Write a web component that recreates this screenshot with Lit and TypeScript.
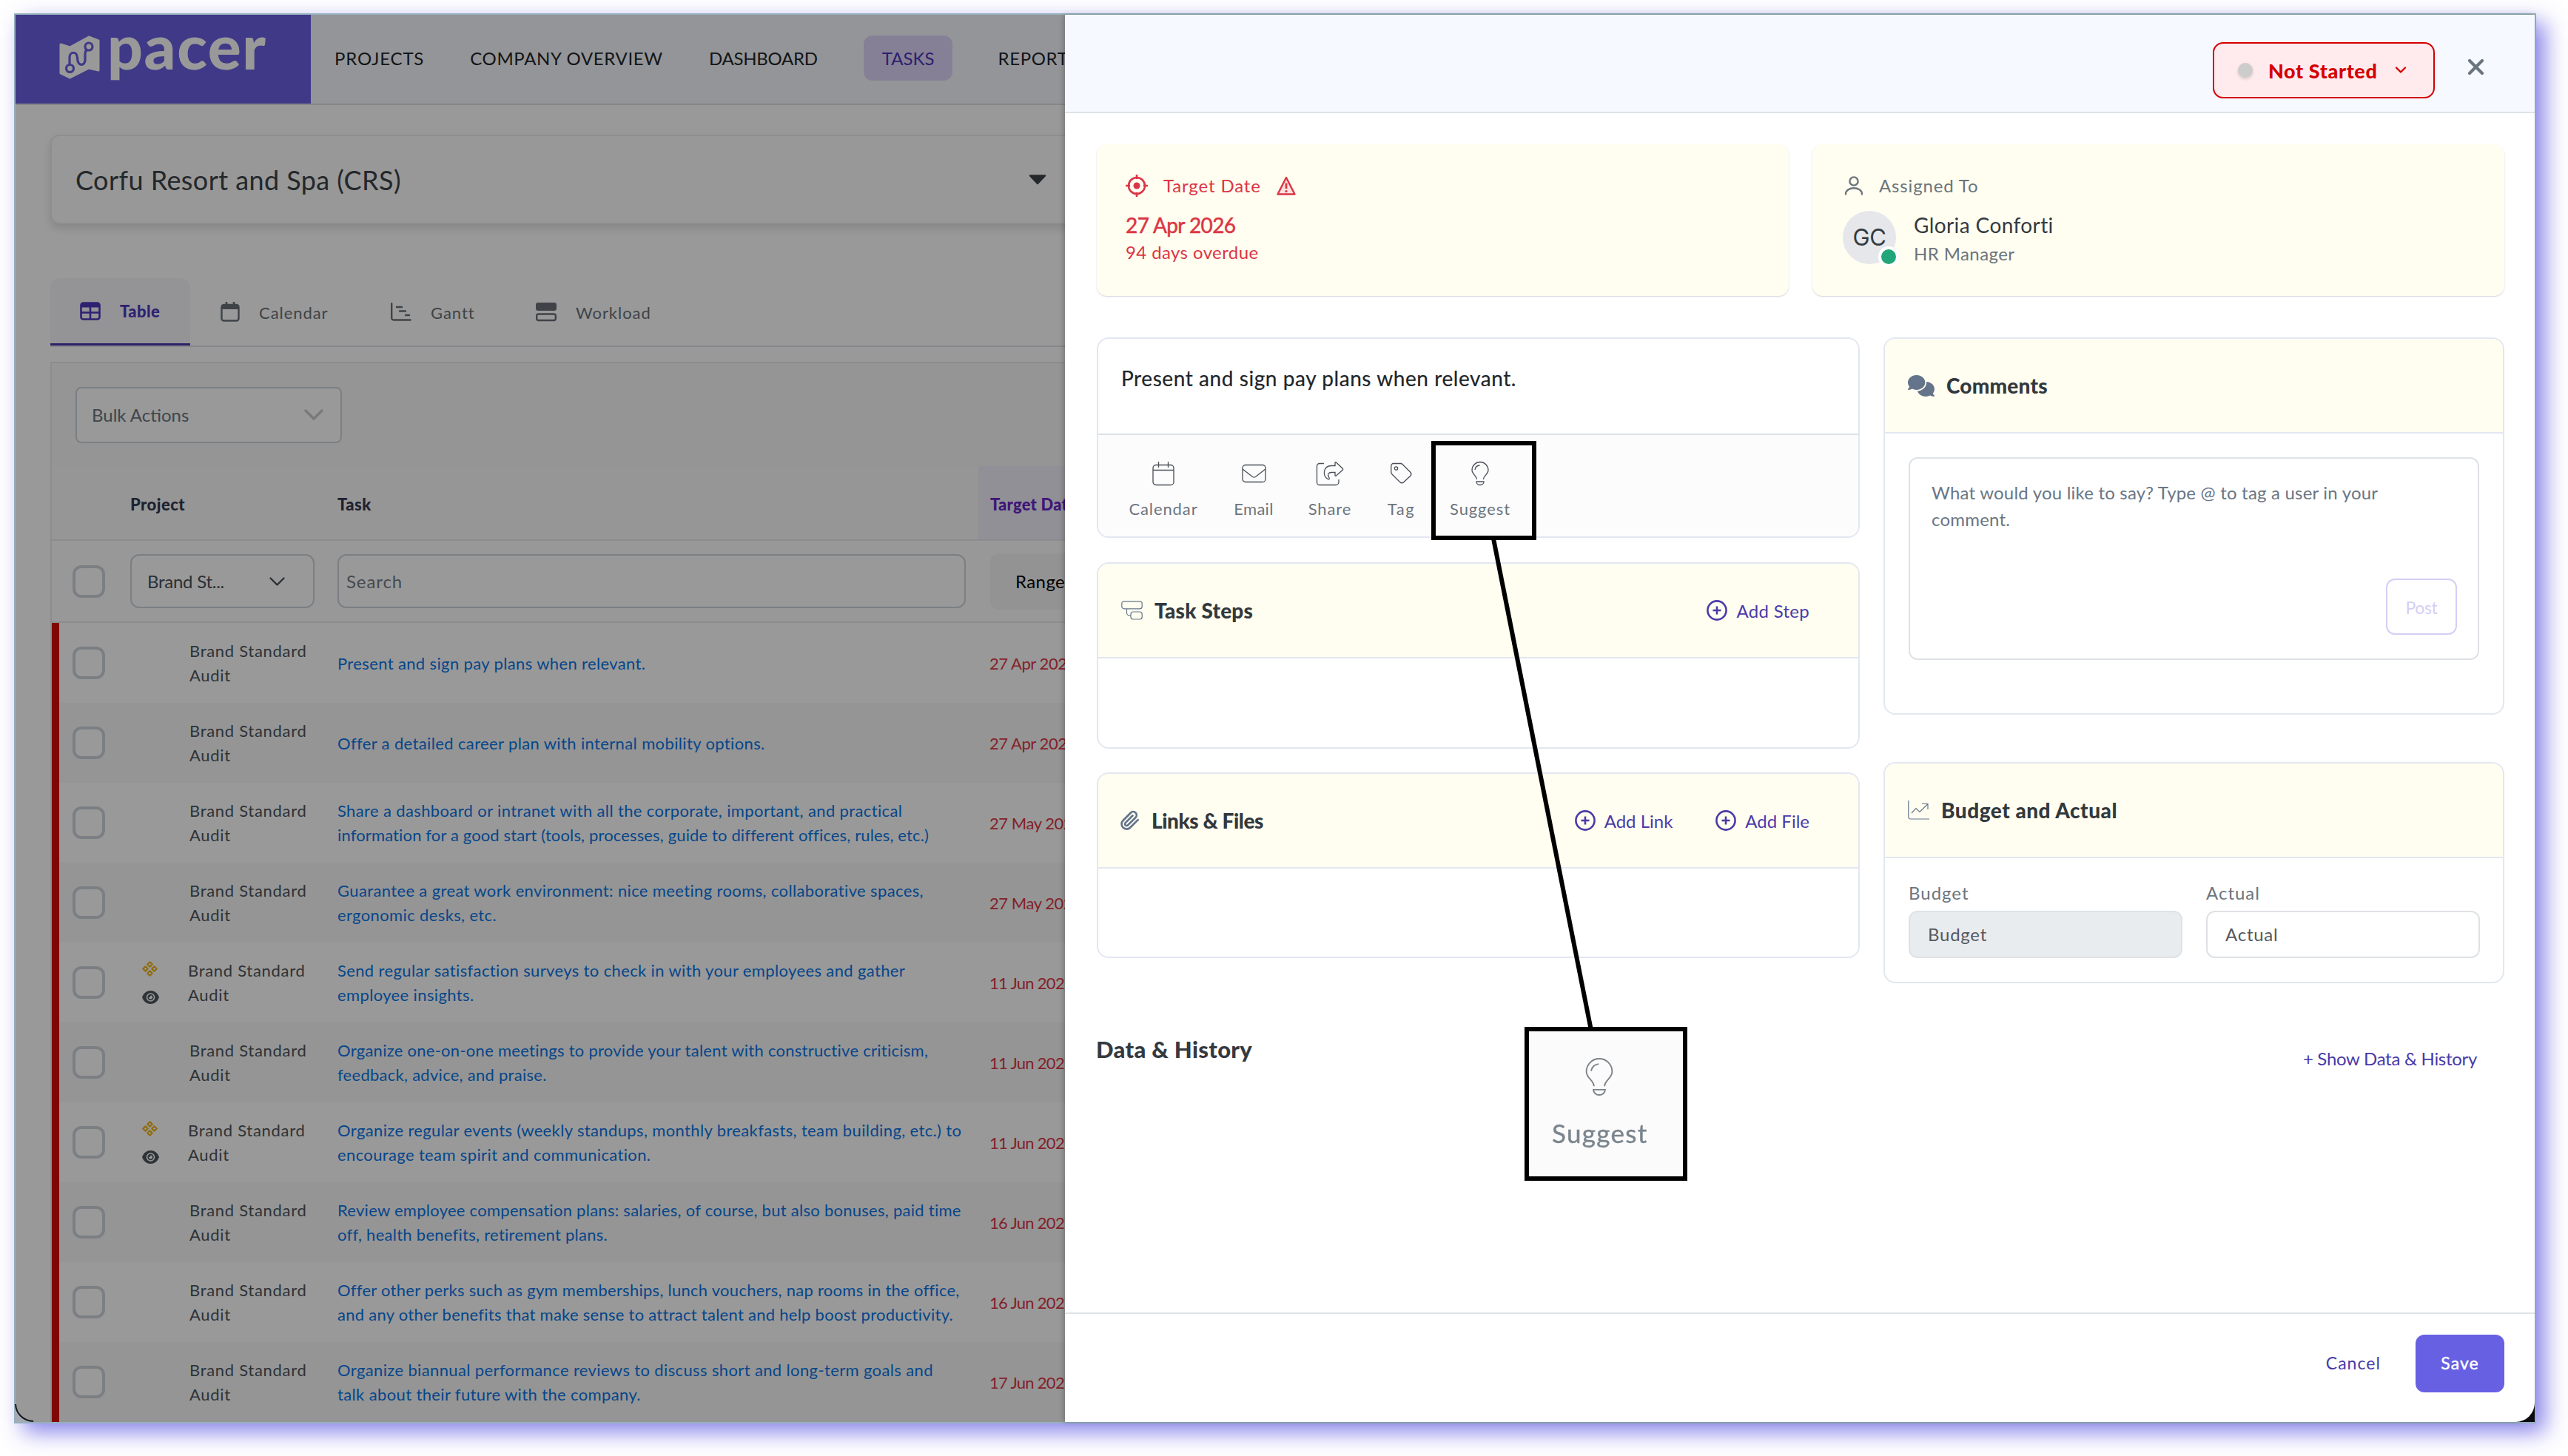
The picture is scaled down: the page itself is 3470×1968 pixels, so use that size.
import { LitElement, html, css, svg, nothing } from "lit";
import { customElement } from "lit/decorators.js";

type Task = { lines: string[]; date: string; flagged?: boolean; snug?: boolean };

const TASKS: Task[] = [
  { lines: ["Present and sign pay plans when relevant."], date: "27 Apr 2026" },
  { lines: ["Offer a detailed career plan with internal mobility options."], date: "27 Apr 2026" },
  { lines: ["Share a dashboard or intranet with all the corporate, important, and practical", "information for a good start (tools, processes, guide to different offices, rules, etc.)"], date: "27 May 2026" },
  { lines: ["Guarantee a great work environment: nice meeting rooms, collaborative spaces,", "ergonomic desks, etc."], date: "27 May 2026" },
  { lines: ["Send regular satisfaction surveys to check in with your employees and gather", "employee insights."], date: "11 Jun 2026", flagged: true },
  { lines: ["Organize one-on-one meetings to provide your talent with constructive criticism,", "feedback, advice, and praise."], date: "11 Jun 2026", snug: true },
  { lines: ["Organize regular events (weekly standups, monthly breakfasts, team building, etc.) to", "encourage team spirit and communication."], date: "11 Jun 2026", flagged: true },
  { lines: ["Review employee compensation plans: salaries, of course, but also bonuses, paid time", "off, health benefits, retirement plans."], date: "16 Jun 2026", snug: true },
  { lines: ["Offer other perks such as gym memberships, lunch vouchers, nap rooms in the office,", "and any other benefits that make sense to attract talent and help boost productivity."], date: "16 Jun 2026", snug: true },
  { lines: ["Organize biannual performance reviews to discuss short and long-term goals and", "talk about their future with the company."], date: "17 Jun 2026" },
];

const plusCircle = svg`<svg class="ico" width="28" height="28" viewBox="0 0 28 28"><circle cx="14" cy="14" r="12.6"/><path d="M14 8.5v11M8.5 14h11"/></svg>`;
const bulb = svg`<path d="M7.5 24C7.5 19 1 17 1 11.5a11 11 0 0 1 22 0C23 17 16.500 19 16.500 24M5 11a7 7 0 0 1 6.500-6M7 27h10a5 4.500 0 0 1-10 0z"/>`;

@customElement("app-root")
export class AppRoot extends LitElement {
  static styles = css`
    :host { display: block; width: 3470px; height: 1968px; overflow: hidden; background: #fff; font-family: Lato, "Open Sans", sans-serif; color: #343a40; }
    * { box-sizing: border-box; }
    span { white-space: nowrap; }
    svg { display: block; flex: none; fill: none; stroke: currentColor; overflow: visible; }
    .stage { padding: 18px 0 0 19px; }
    .frame { position: relative; display: flex; width: 3408px; height: 1906px; border: 2px solid #94b0bd; background: linear-gradient(90deg, #a3abb5 50%, #0a0c12 50%); box-shadow: 12px 12px 28px rgba(103, 96, 226, .77); }
    .page { position: relative; width: 1418px; height: 1902px; overflow: hidden; background: #fff; border-bottom-left-radius: 22px; flex: none; }
    .shade { position: absolute; inset: 0; background: rgba(0, 0, 0, .4); }

    .top { display: flex; height: 122px; border-bottom: 2px solid #dde0e5; background: #f7f9fe; }
    .brand { display: flex; width: 399px; height: 120px; background: #695fe3; color: #fff; padding: 29px 0 0 59px; gap: 10px; flex: none; }
    .word { font-size: 84px; font-weight: 900; line-height: 84px; letter-spacing: 1.6px; margin-top: -29px; }
    .nav { display: flex; align-items: center; gap: 62px; padding: 0 0 4px 32px; height: 120px; }
    .nv { font-size: 24px; color: #212529; line-height: 61px; }
    .n1 { letter-spacing: .85px; } .n2 { letter-spacing: .65px; } .n3 { letter-spacing: -.25px; }
    .nv.on { color: #4b35ba; padding: 0 24px 0 25px; background: #ded5f9; border-radius: 12px; height: 61px; }

    .content { padding: 40px 0 0 47px; width: 1500px; }
    .picker { display: flex; align-items: center; justify-content: space-between; height: 121px; border: 2px solid #e9edee; border-radius: 12px; padding: 0 105px 0 32px; background: #fdfdfd; box-shadow: 0 6px 12px rgba(0, 0, 0, .12); color: #3c4349; }
    .place { font-size: 36px; letter-spacing: .42px; }
    .tabs { display: flex; margin-top: 73px; height: 93px; border-bottom: 2px solid #dee2e6; color: #6a7178; }
    .tab { display: flex; align-items: center; height: 91px; padding: 0 0 0 41px; font-size: 22px; gap: 26px; letter-spacing: .95px; }
    .tab span { margin-top: 1px; }
    .tab.a { width: 189px; padding: 0 0 0 40px; background: #f7f7fc; border-radius: 12px 12px 0 0; border-bottom: 3px solid #4a37b0; color: #4e38bc; font-weight: 900; gap: 26px; letter-spacing: .4px; }
    .tab.b { width: 230px; } .tab.c { width: 196px; }
    .panel { margin-top: 20px; border: 2px solid #e6eaeb; border-bottom: 0; height: 1500px; background: #fff; }
    .bulk { height: 139px; background: #f9f9f9; padding: 32px 0 0 32px; }
    .sel { display: flex; align-items: center; justify-content: space-between; border: 2px solid #ced4da; border-radius: 8px; background: #fff; }
    .sel.big { width: 360px; height: 76px; padding: 0 23px 2px 20px; color: #6c757d; font-size: 24px; }
    .chev { stroke: #c8cacc; }
    .row { display: grid; grid-template-columns: 106px 280px 866px 1fr; align-items: center; height: 108px; }
    .hd { height: 101px; border-bottom: 2px solid #e6eaeb; background: #fbfafb; font-size: 22px; font-weight: 900; color: #343850; letter-spacing: .45px; }
    .hd span { margin-top: 3px; }
    .tgt { background: #f1f1fb; height: 99px; display: flex; align-items: center; padding-left: 16px; color: #6a26c8; letter-spacing: .2px; }
    .flt { height: 111px; border-bottom: 2px solid #e6eaeb; background: #fdfdfd; font-size: 24px; }
    .flt .sel { height: 73px; border-radius: 12px; }
    .prj { width: 249px; padding: 0 38px 0 21px; color: #495057; letter-spacing: -.25px; }
    .srch { width: 849px; padding: 0 10px; color: #757c83; letter-spacing: .9px; }
    .rng { margin-left: 16px; height: 76px; background: #f6f6f6; border-radius: 12px; display: flex; align-items: center; padding-left: 34px; color: #000; letter-spacing: .4px; }
    .body { border-left: 10px solid #d40b08; font-size: 22px; }
    .body .row { grid-template-columns: 96px 280px 866px 1fr; line-height: 33px; }
    .body .row:nth-child(even) { background: #f9f9f9; }
    .cb { width: 44px; height: 44px; border: 4px solid #ced4da; border-radius: 12px; background: #fff; margin-left: 28px; }
    .body .cb { margin-left: 18px; }
    .who { display: flex; align-items: center; color: #4d555d; letter-spacing: .7px; }
    .marks { width: 80px; padding-left: 15px; display: flex; flex-direction: column; gap: 19px; flex: none; }
    .marks.f { width: 78px; padding-left: 16px; }
    .amber { stroke: #f0b41c; }
    .col { display: flex; flex-direction: column; }
    .link { color: #0b76e6; letter-spacing: .37px; }
    .link.snug { letter-spacing: .27px; }
    .long { letter-spacing: .14px; }
    .date { color: #da3746; padding-left: 15px; letter-spacing: -.45px; }
    .date.jun { letter-spacing: -.7px; }

    .drawer { position: relative; width: 1986px; height: 1902px; display: flex; flex-direction: column; background: #fff; border-bottom-right-radius: 26px; box-shadow: -2px 0 6px rgba(0, 0, 0, .22); }
    .dh { height: 133px; border-bottom: 2px solid #dee2e6; background: #f6f9ff; display: flex; justify-content: flex-end; padding: 37px 69px 0 0; flex: none; }
    .status { display: flex; align-items: center; width: 300px; height: 76px; border: 2px solid #d50000; border-radius: 14px; background: #ffebee; color: #d50000; padding: 0 36px 0 32px; font-size: 27px; font-weight: 900; letter-spacing: .6px; }
    .dot { width: 20px; height: 20px; border-radius: 50%; background: #ccc; box-shadow: 0 2px 4px rgba(0, 0, 0, .15); margin-right: 21px; flex: none; }
    .status svg { margin-left: auto; }
    .x { margin: 23px 0 0 45px; color: #6b757d; }
    .db { flex: 1; padding: 42px 41px 0 43px; }
    .two { display: flex; gap: 32px; }
    .info { width: 935px; height: 205px; border-radius: 14px; background: #fffef0; box-shadow: 0 1px 2px rgba(30, 40, 80, .2); padding: 41px 39px 0; }
    .lab { display: flex; align-items: center; height: 30px; font-size: 24px; gap: 21px; color: #6c757d; letter-spacing: .85px; }
    .lab span { margin-top: -1px; }
    .red { color: #dc3545; }
    .dt { display: block; font-size: 28px; line-height: 34px; margin-top: 21px; letter-spacing: -.6px; -webkit-text-stroke: .5px currentColor; }
    .od { display: block; font-size: 24px; line-height: 30px; margin-top: 5px; letter-spacing: .4px; }
    .person { display: flex; margin-top: 19px; gap: 24px; padding-left: 2px; }
    .av { position: relative; width: 72px; height: 72px; border-radius: 50%; background: #e5e7eb; font: 31px/72px Inter, sans-serif; text-align: center; color: #343a40; letter-spacing: -.5px; }
    .on2 { position: absolute; right: -4px; bottom: -4px; width: 28px; height: 28px; border-radius: 50%; border: 4px solid #fff; background: #21a67a; }
    .nm { font-size: 28px; line-height: 34px; color: #343a40; margin-top: 2px; letter-spacing: .4px; }
    .hr { font-size: 24px; line-height: 30px; color: #6c757d; margin-top: 7px; letter-spacing: .4px; }
    .cols { display: flex; gap: 32px; margin-top: 56px; }
    .lc { width: 1031px; } .rc { width: 839px; }
    .card { border: 2px solid #e2e7f1; border-radius: 16px; overflow: hidden; }
    .c1 { height: 271px; } .c2 { height: 252px; margin-top: 33px; } .c3 { height: 251px; margin-top: 32px; }
    .c4 { height: 510px; } .c5 { height: 299px; margin-top: 64px; }
    .ttl { height: 130px; border-bottom: 2px solid #dce1e6; padding: 36px 0 0 31px; font-size: 28px; line-height: 34px; color: #212529; letter-spacing: .57px; -webkit-text-stroke: .2px currentColor; }
    .acts { height: 139px; background: #fcfcfd; display: flex; padding: 36px 0 0 42px; color: #4a4f58; }
    .act { display: flex; flex-direction: column; align-items: center; gap: 19px; font-size: 22px; line-height: 26px; letter-spacing: .9px; }
    .act svg { height: 32px; stroke-width: 1.3; }
    .act span { color: #6c757d; }
    .p1 { width: 92px; } .p2 { width: 52px; margin-left: 50px; letter-spacing: .3px; } .p3 { width: 60px; margin-left: 47px; } .p4 { width: 37px; margin-left: 48px; letter-spacing: 1.5px; } .p5 { width: 80px; margin-left: 48px; }
    .sh { display: flex; align-items: center; height: 128px; border-bottom: 2px solid #e2e7f1; background: #fffef0; padding: 0 66px 0 31px; color: #64748b; }
    .st { font-size: 28px; font-weight: 900; color: #32383d; margin-left: 16px; letter-spacing: .2px; }
    .st.tight { letter-spacing: -.45px; }
    .st.wide { letter-spacing: .5px; }
    .sp { flex: 1; }
    .add { display: flex; align-items: center; gap: 12px; font-size: 24px; color: #4a3aa8; margin-left: 58px; letter-spacing: 0; }
    .add.s { letter-spacing: .3px; }
    .add .ico { stroke-width: 2.6; }
    .cm { margin: 32px 0 0 32px; width: 771px; height: 274px; border: 2px solid #dee2e6; border-radius: 12px; padding: 28px 28px 0 29px; font-size: 24px; line-height: 36px; letter-spacing: .2px; color: #6a7684; display: flex; flex-direction: column; }
    .post { align-self: flex-end; margin: 62px 0 0; width: 96px; height: 76px; line-height: 74px; text-align: center; border: 2px solid #d3cff5; border-radius: 12px; color: #d3cff5; font-size: 23px; letter-spacing: -.4px; }
    .flds { display: flex; gap: 32px; padding: 31px 0 0 32px; font-size: 24px; line-height: 32px; color: #6c757d; letter-spacing: 1px; }
    .fld { width: 370px; }
    .inp { margin-top: 8px; height: 64px; border: 2px solid #dee2e6; border-radius: 12px; padding-left: 24px; line-height: 59px; color: #54595e; letter-spacing: .75px; }
    .inp.off { background: #e9ecef; }
    .hist { display: flex; justify-content: space-between; margin-top: 59px; padding-right: 37px; }
    .ht { font-size: 31px; font-weight: 900; line-height: 60px; letter-spacing: .3px; margin-left: -1px; }
    .hs { font-size: 24px; color: #4a3aa8; line-height: 60px; margin-top: 13px; letter-spacing: -.3px; }
    .ft { height: 148px; border-top: 2px solid #dee2e6; display: flex; justify-content: flex-end; padding: 28px 41px 0 0; font-size: 23px; line-height: 76px; color: #4a3aa8; letter-spacing: 1.05px; flex: none; }
    .save { width: 120px; height: 78px; border-radius: 12px; background: #6760e3; color: #fff; text-align: center; margin-left: 47px; -webkit-text-stroke: .4px #fff; }

    .box { position: absolute; border: 6px solid #000; }
    .b1 { left: 1913px; top: 576px; width: 142px; height: 134px; }
    .b2 { left: 2039px; top: 1368px; width: 220px; height: 208px; background: #fbfbfb; color: #7d8289; padding: 36px 0 0 31px; }
    .b2 svg { margin: 0 0 0 45px; stroke-width: 1.2; filter: blur(.5px); }
    .b2 span { display: block; font-size: 35px; line-height: 42px; margin-top: 29px; color: #7b858d; letter-spacing: 1.3px; filter: blur(.5px); -webkit-text-stroke: .4px currentColor; }
    .lead { position: absolute; left: 0; top: 0; stroke: #000; stroke-width: 6; }
    .arc { stroke: #15181c; stroke-width: 2; }
  `;

  render() {
    return html`<div class="stage"><div class="frame">
      <div class="page">${this.header()}
        <div class="content">${this.picker()}${this.tabs()}${this.table()}</div>
        <div class="shade"></div>
      </div>
      ${this.drawer()}
      <svg class="lead" width="3404" height="1902" viewBox="0 0 3404 1902"><path d="M1997 708L2128.500 1370"/><path class="arc" d="M0 1878A24 24 0 0 0 24 1901"/></svg>
      <div class="box b1"></div>
      <div class="box b2"><svg width="38" height="51" viewBox="0 0 24 32">${bulb}</svg><span>Suggest</span></div>
    </div></div>`;
  }

  header() {
    return html`<div class="top">
      <div class="brand">
        <svg width="55" height="58" viewBox="0 0 55 58"><path d="M2 11 14.500 15 40 1 53 6V46L40 43 14.500 56 2 50z" fill="currentColor" stroke-width="3" stroke-linejoin="round"/><g stroke="#695fe3" stroke-width="3.200"><circle cx="14.500" cy="43.500" r="5"/><circle cx="40" cy="14" r="5"/><path d="M14 38V29C14 20 24 20 24.500 29C25 42 35 40 35 32V24C35 21 36 19 38 18"/></g></svg>
        <span class="word">pacer</span>
      </div>
      <div class="nav"><span class="nv n1">PROJECTS</span><span class="nv n2">COMPANY OVERVIEW</span><span class="nv n3">DASHBOARD</span><span class="nv on">TASKS</span><span class="nv n2">REPORTS</span></div>
    </div>`;
  }

  picker() {
    return html`<div class="picker"><span class="place">Corfu Resort and Spa (CRS)</span>
      <svg width="24" height="14" viewBox="0 0 24 14"><path d="M2 1.500H22L12 12z" fill="currentColor" stroke-width="2.500" stroke-linejoin="round"/></svg></div>`;
  }

  tabs() {
    return html`<div class="tabs">
      <div class="tab a"><svg width="28" height="25" viewBox="0 0 28 25"><rect x="1.500" y="1.500" width="25" height="22" rx="3" stroke-width="2.600"/><path d="M2 4.500H26" stroke-width="6"/><path d="M14 6V23M2 14.500H26" stroke-width="2.600"/></svg><span>Table</span></div>
      <div class="tab b"><svg width="26" height="27" viewBox="0 0 26 27"><rect x="1.500" y="4" width="23" height="21.500" rx="3" stroke-width="2.400"/><path d="M2 7H24" stroke-width="6"/><path d="M8 0V5M18 0V5" stroke-width="2.600"/></svg><span>Calendar</span></div>
      <div class="tab c"><svg width="28" height="25" viewBox="0 0 28 25" stroke-width="2.400" stroke-linecap="round"><path d="M1.200 1.200V21a2.500 2.500 0 0 0 2.500 2.500H26.500M8 6H15M12 11.500H20M20 17H25"/></svg><span>Gantt</span></div>
      <div class="tab"><svg width="28" height="25" viewBox="0 0 28 25"><rect x="0" y="0" width="28" height="11" rx="3" fill="currentColor" stroke="none"/><rect x="1.200" y="15.500" width="25.600" height="8.500" rx="2.500" stroke-width="2.400"/></svg><span>Workload</span></div>
    </div>`;
  }

  table() {
    return html`<div class="panel">
      <div class="bulk"><div class="sel big"><span>Bulk Actions</span><svg class="chev" width="26" height="15" viewBox="0 0 26 15" stroke-width="3.500" stroke-linecap="round" stroke-linejoin="round"><path d="M2 2 13 13 24 2"/></svg></div></div>
      <div class="row hd"><i></i><span>Project</span><span>Task</span><div class="tgt"><span>Target Date</span></div></div>
      <div class="row flt"><div class="cb"></div>
        <div class="sel prj"><span>Brand St...</span><svg width="21" height="12" viewBox="0 0 21 12" stroke-width="2.400" stroke-linecap="round" stroke-linejoin="round"><path d="M1.500 1.500 10.500 10.500 19.500 1.500"/></svg></div>
        <div class="sel srch"><span>Search</span></div>
        <div class="rng"><span>Range</span></div></div>
      <div class="body">${TASKS.map((k) => html`<div class="row">
        <div class="cb"></div>
        <div class="who"><div class="marks ${k.flagged ? "f" : ""}">${k.flagged ? html`
          <svg class="amber" width="21" height="21" viewBox="0 0 21 21" stroke-width="2.200" stroke-linejoin="round"><path d="M10.500 1.300 13.700 4.500 10.500 7.700 7.300 4.500zM10.500 13.300 13.700 16.500 10.500 19.700 7.300 16.500zM4.500 7.300 7.700 10.500 4.500 13.700 1.300 10.500zM16.500 7.300 19.700 10.500 16.500 13.700 13.300 10.500z"/></svg>
          <svg width="23" height="18" viewBox="0 0 23 18"><path d="M0 9C4-3 19-3 23 9 19 21 4 21 0 9z" fill="currentColor" stroke="none"/><circle cx="11.500" cy="9" r="5" stroke="#fff" stroke-width="1.600"/><path d="M11.500 6.500a2.500 2.500 0 1 1-2.500 2.500q2.500 0 2.500-2.500z" fill="#fff" stroke="none"/></svg>` : nothing}</div>
          <div class="col"><span>Brand Standard</span><span>Audit</span></div></div>
        <div class="col link ${k.snug ? "snug" : ""}">${k.lines.map((l) => html`<span class=${l.length > 86 ? "long" : ""}>${l}</span>`)}</div>
        <span class="date ${k.date.includes("Jun") ? "jun" : ""}">${k.date}</span></div>`)}</div>
    </div>`;
  }

  drawer() {
    return html`<div class="drawer">
      <div class="dh"><div class="status"><div class="dot"></div><span>Not Started</span><svg width="16" height="10" viewBox="0 0 16 10" stroke-width="2.400" stroke-linecap="round" stroke-linejoin="round"><path d="M2 1.500 8 7.500 14 1.500"/></svg></div>
        <svg class="x" width="21" height="21" viewBox="0 0 21 21" stroke-width="4.200" stroke-linecap="round"><path d="M2 2 19 19M19 2 2 19"/></svg></div>
      <div class="db">
        <div class="two">
          <div class="info red">
            <div class="lab red"><svg width="30" height="30" viewBox="0 0 30 30" stroke-width="2.600"><circle cx="15" cy="15" r="11"/><path d="M15 0V6M15 24V30M0 15H6M24 15H30"/><circle cx="15" cy="15" r="4.500" fill="currentColor" stroke="none"/></svg><span>Target Date</span><svg width="26" height="26" viewBox="0 0 26 26" stroke-width="2.400" stroke-linejoin="round"><path d="M13 2 24.500 24.500H1.500z" fill="#fbe3df"/><path d="M13 9.500V17M13 19.300V22" stroke-width="2.800"/></svg></div>
            <span class="dt">27 Apr 2026</span><span class="od">94 days overdue</span>
          </div>
          <div class="info">
            <div class="lab"><svg width="30" height="26" viewBox="0 0 30 26" stroke-width="2.400" stroke-linecap="round"><circle cx="17" cy="7" r="5.600"/><path d="M6 24.500C6 13.500 28 13.500 28 24.500"/></svg><span>Assigned To</span></div>
            <div class="person"><div class="av">GC<div class="on2"></div></div><div class="col"><span class="nm">Gloria Conforti</span><span class="hr">HR Manager</span></div></div>
          </div>
        </div>
        <div class="cols">
          <div class="lc">
            <div class="card c1"><div class="ttl"><span>Present and sign pay plans when relevant.</span></div>
              <div class="acts">
                <div class="act p1"><svg width="30" viewBox="0 0 30 32"><rect x="1" y="4.500" width="28" height="27" rx="4"/><path d="M1 11.500H29M8.500 0V8M21.500 0V8"/></svg><span>Calendar</span></div>
                <div class="act p2"><svg width="33" viewBox="0 0 33 32"><rect x="1" y="4.500" width="31" height="23" rx="4"/><path d="M1 10 14.500 20.500a3.500 3.500 0 0 0 4 0L32 10"/></svg><span>Email</span></div>
                <div class="act p3"><svg width="36" viewBox="0 0 36 32"><path d="M10 2.500H4a3.500 3.500 0 0 0-3.500 3.500V28A3.500 3.500 0 0 0 4 31.500H26a4 4 0 0 0 4-4V24M25 1.500Q25 0 26.500 1L35.500 9.500Q36 10.300 35.500 11L26.500 19Q25 20 25 18.500V14.500H20C16 14.500 14.500 18 16.500 20.500C18 23 17 24.500 15 23.500C8 19 8.500 5.500 20 5.500H25z"/></svg><span>Share</span></div>
                <div class="act p4"><svg width="29" viewBox="0 0 29 32"><path d="M4 2.500H13.500a4 4 0 0 1 2.800 1.200L27 14.500a3.500 3.500 0 0 1 0 4.500L18 27.500a4 4 0 0 1-5.500 0L2 17a4 4 0 0 1-1.200-2.800V5.500a3 3 0 0 1 3-3z"/><circle cx="7.500" cy="9" r="2.200"/></svg><span>Tag</span></div>
                <div class="act p5"><svg width="24" viewBox="0 0 24 32">${bulb}</svg><span>Suggest</span></div>
              </div></div>
            <div class="card c2"><div class="sh"><svg width="29" height="26" viewBox="0 0 29 26" stroke-width="1.200"><rect x=".8" y=".8" width="27.400" height="10" rx="3"/><rect x="13" y="15" width="15.200" height="10" rx="3"/><path d="M7.500 11V16a4 4 0 0 0 4 4H13"/></svg><span class="st">Task Steps</span><i class="sp"></i><div class="add s">${plusCircle}<span>Add Step</span></div></div></div>
            <div class="card c3"><div class="sh"><svg width="25" height="27" viewBox="1.500 1 22 22.500" stroke-width="2.400" stroke-linecap="round"><path d="M21.440 11.050l-9.190 9.190a6 6 0 0 1-8.490-8.490l9.190-9.190a4 4 0 0 1 5.660 5.660l-9.200 9.190a2 2 0 0 1-2.830-2.830l8.490-8.480"/></svg><span class="st tight">Links &amp; Files</span><i class="sp"></i><div class="add">${plusCircle}<span>Add Link</span></div><div class="add">${plusCircle}<span>Add File</span></div></div></div>
          </div>
          <div class="rc">
            <div class="card c4"><div class="sh"><svg width="36" height="29" viewBox="0 0 640 512"><path fill="currentColor" stroke="none" d="M208 352c114.900 0 208-78.800 208-176S322.900 0 208 0S0 78.800 0 176c0 38.600 14.700 74.300 39.600 103.400c-3.500 9.400-8.700 17.700-14.200 24.700c-4.800 6.200-9.700 11-13.300 14.300c-3 2.500-4 3.500-5.600 4.700C1 327.200-1.400 334.400 .8 340.900S9.100 352 16 352c21.800 0 43.800-5.600 62.100-12.500c9.200-3.500 17.800-7.400 25.300-11.400C134.100 343.300 169.800 352 208 352zM448 176c0 112.300-99.100 196.900-216.500 207C255.800 457.400 336.400 512 432 512c38.200 0 73.900-8.700 104.700-23.900c7.500 4 16 7.900 25.200 11.400c18.300 6.900 40.300 12.500 62.100 12.500c6.900 0 13.100-4.500 15.200-11.100c2.100-6.600-.2-13.800-5.800-17.900c-8-6-14-13-18.900-19c-5.500-7-10.700-15.400-14.200-24.700c24.900-29 39.600-64.700 39.600-103.400c0-92.800-84.900-168.900-192.600-175.500c.4 5.100 .6 10.300 .6 15.500z"/></svg><span class="st">Comments</span></div>
              <div class="cm"><span>What would you like to say? Type @ to tag a user in your</span><span>comment.</span><div class="post">Post</div></div></div>
            <div class="card c5"><div class="sh"><svg width="29" height="26" viewBox="0 0 29 26" stroke-width="1.200"><path d="M.8 0V22a3 3 0 0 0 3 3H29M5 17 11 10.500 16 15.500 26.500 5M19 4.500H27V12"/></svg><span class="st wide">Budget and Actual</span></div>
              <div class="flds"><div class="fld"><span>Budget</span><div class="inp off">Budget</div></div><div class="fld"><span>Actual</span><div class="inp">Actual</div></div></div></div>
          </div>
        </div>
        <div class="hist"><span class="ht">Data &amp; History</span><span class="hs">+ Show Data &amp; History</span></div>
      </div>
      <div class="ft"><span>Cancel</span><div class="save">Save</div></div>
    </div>`;
  }
}
